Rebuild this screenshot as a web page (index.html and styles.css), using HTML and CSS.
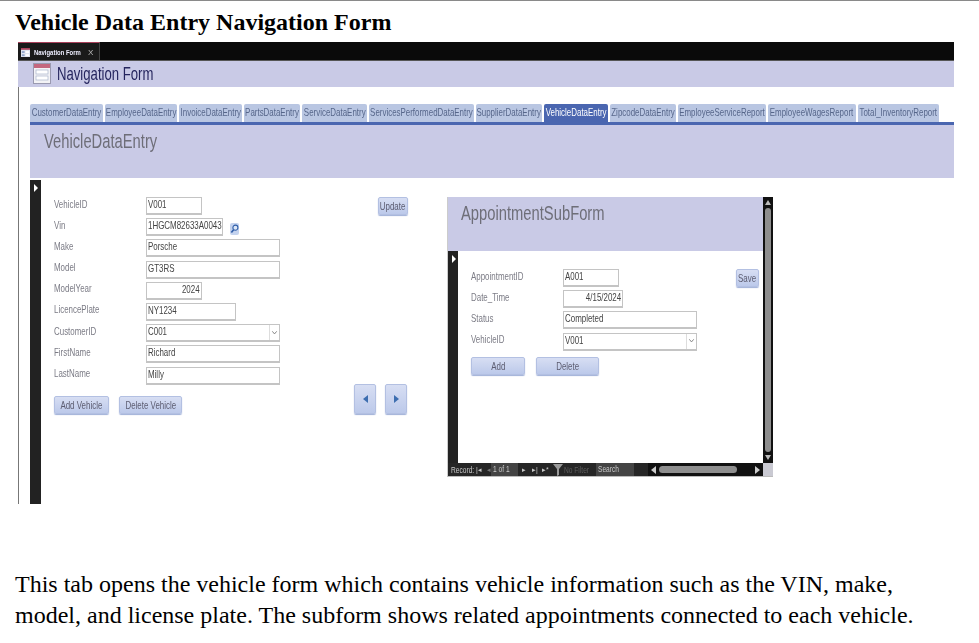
FILE: index.html
```html
<!DOCTYPE html>
<html lang="en">
<head>
<meta charset="UTF-8">
<meta name="viewport" content="width=device-width, initial-scale=1.0">
<title>Vehicle Data Entry Navigation Form</title>
<link rel="stylesheet" href="styles.css">
</head>
<body>
  <h1 class="title">Vehicle Data Entry Navigation Form</h1>

  <div class="shot">
    <div class="docbar">
      <div class="doctab">
        <svg class="doctab-icon" viewBox="0 0 10 10"><rect width="10" height="10" fill="#dfe3ee"/><rect width="10" height="2" fill="#a8405a"/><rect x="1" y="3.5" width="3" height="2" fill="#8fa3c8"/><rect x="5" y="3.5" width="4" height="2" fill="#fff"/><rect x="1" y="7" width="3" height="2" fill="#8fa3c8"/><rect x="5" y="7" width="4" height="2" fill="#fff"/></svg>
        <span class="doctab-name"><span class="sq">Navigation Form</span></span>
        <span class="doctab-x">X</span>
      </div>
    </div>
    <div class="formhead">
      <svg class="formhead-icon" viewBox="0 0 18 21"><rect x=".5" y=".5" width="17" height="20" fill="#f3f3f6" stroke="#9a9ab0"/><rect x="1" y="1" width="16" height="4" fill="#c4677f"/><rect x="3" y="7" width="12" height="4" fill="#fff" stroke="#a9b4cc" stroke-width=".7"/><rect x="3" y="13" width="12" height="4" fill="#fff" stroke="#a9b4cc" stroke-width=".7"/></svg>
      <span class="sq">Navigation Form</span>
    </div>

    <div class="formbody">
      <div class="tabs">
        <div class="tab t1"><span class="sq">CustomerDataEntry</span></div>
        <div class="tab t2"><span class="sq">EmployeeDataEntry</span></div>
        <div class="tab t3"><span class="sq">InvoiceDataEntry</span></div>
        <div class="tab t4"><span class="sq">PartsDataEntry</span></div>
        <div class="tab t5"><span class="sq">ServiceDataEntry</span></div>
        <div class="tab t6"><span class="sq">ServicesPerformedDataEntry</span></div>
        <div class="tab t7"><span class="sq">SupplierDataEntry</span></div>
        <div class="tab t8 active"><span class="sq">VehicleDataEntry</span></div>
        <div class="tab t9"><span class="sq">ZipcodeDataEntry</span></div>
        <div class="tab t10"><span class="sq">EmployeeServiceReport</span></div>
        <div class="tab t11"><span class="sq">EmployeeWagesReport</span></div>
        <div class="tab t12"><span class="sq">Total_InventoryReport</span></div>
      </div>
      <div class="pagehead"><span class="sq">VehicleDataEntry</span></div>

      <div class="detail">
        <div class="selector"><span class="selector-arrow"></span></div>
        <div class="entry">
          <div class="row"><label><span class="sq">VehicleID</span></label><div class="field w56"><span class="sq">V001</span></div></div>
          <div class="row"><label><span class="sq">Vin</span></label><div class="vin"><div class="field w77 clip"><span class="sq">1HGCM82633A00435</span></div><span class="lookup"><svg viewBox="0 0 10 12"><circle cx="6" cy="4.5" r="2.8" fill="#dbe6f7" stroke="#2f5ea8" stroke-width="1.2"/><path d="M4 6.8 1.5 10" stroke="#2f5ea8" stroke-width="1.8"/></svg></span></div></div>
          <div class="row"><label><span class="sq">Make</span></label><div class="field w134"><span class="sq">Porsche</span></div></div>
          <div class="row"><label><span class="sq">Model</span></label><div class="field w134"><span class="sq">GT3RS</span></div></div>
          <div class="row"><label><span class="sq">ModelYear</span></label><div class="field w56 num"><span class="sq">2024</span></div></div>
          <div class="row"><label><span class="sq">LicencePlate</span></label><div class="field w90"><span class="sq">NY1234</span></div></div>
          <div class="row"><label><span class="sq">CustomerID</span></label><div class="field w134 combo"><span class="sq">C001</span><span class="combo-btn"><svg viewBox="0 0 8 6"><path d="M1.5 1.5 4 4.5 6.5 1.5" fill="none" stroke="#777"/></svg></span></div></div>
          <div class="row"><label><span class="sq">FirstName</span></label><div class="field w134"><span class="sq">Richard</span></div></div>
          <div class="row"><label><span class="sq">LastName</span></label><div class="field w134"><span class="sq">Milly</span></div></div>
          <div class="actions">
            <div class="btn w55"><span class="sq">Add Vehicle</span></div>
            <div class="btn w63"><span class="sq">Delete Vehicle</span></div>
          </div>
        </div>

        <div class="side">
          <div class="btn w30 update"><span class="sq">Update</span></div>
          <div class="pager">
            <div class="btn arrow"><span class="tri tri-left"></span></div>
            <div class="btn arrow"><span class="tri tri-right"></span></div>
          </div>
        </div>

        <div class="sub">
          <div class="sub-top">
            <div class="sub-main">
              <div class="sub-head"><span class="sq">AppointmentSubForm</span></div>
              <div class="sub-detail">
                <div class="selector sub-selector"><span class="selector-arrow"></span></div>
                <div class="sub-entry">
                  <div class="row"><label><span class="sq">AppointmentID</span></label><div class="field w56"><span class="sq">A001</span></div></div>
                  <div class="row"><label><span class="sq">Date_Time</span></label><div class="field w60 num"><span class="sq">4/15/2024</span></div></div>
                  <div class="row"><label><span class="sq">Status</span></label><div class="field w134"><span class="sq">Completed</span></div></div>
                  <div class="row"><label><span class="sq">VehicleID</span></label><div class="field w134 combo"><span class="sq">V001</span><span class="combo-btn"><svg viewBox="0 0 8 6"><path d="M1.5 1.5 4 4.5 6.5 1.5" fill="none" stroke="#777"/></svg></span></div></div>
                  <div class="actions sub-actions">
                    <div class="btn w54"><span class="sq">Add</span></div>
                    <div class="btn w63"><span class="sq">Delete</span></div>
                  </div>
                </div>
                <div class="btn save"><span class="sq">Save</span></div>
              </div>
            </div>
            <div class="vscroll">
              <span class="tri tri-up"></span>
              <span class="vthumb"></span>
              <span class="tri tri-down"></span>
            </div>
          </div>
          <div class="recbar">
            <span class="rec-label"><span class="sq">Record:</span></span>
            <span class="rec-nav rec-first">|◂</span>
            <span class="rec-nav rec-prev">◂</span>
            <span class="rec-box rec-count"><span class="sq">1 of 1</span></span>
            <span class="rec-nav">▸</span>
            <span class="rec-nav">▸|</span>
            <span class="rec-nav">▸*</span>
            <svg class="rec-funnel" viewBox="0 0 10 12"><path d="M0 0h10L6 5v6L4 12V5z" fill="#9a9a9a"/></svg>
            <span class="rec-filter"><span class="sq">No Filter</span></span>
            <span class="rec-box rec-search"><span class="sq">Search</span></span>
            <span class="hscroll">
              <span class="tri tri-left small"></span>
              <span class="hthumb"></span>
              <span class="tri tri-right small"></span>
            </span>
            <span class="corner"></span>
          </div>
        </div>
      </div>
    </div>
  </div>

  <p class="caption">This tab opens the vehicle form which contains vehicle information such as the VIN, make, model, and license plate. The subform shows related appointments connected to each vehicle.</p>
</body>
</html>
```

FILE: styles.css
```css
* {
  box-sizing: border-box;
}

body {
  margin: 0;
  padding: 0 15px;
  background: #fff;
  color: #000;
  font-family: "Liberation Serif", serif;
  border-top: 1px solid #8a8a8a;
}

.title {
  margin: 0;
  padding-top: 7px;
  font-size: 24px;
  line-height: 28px;
  font-weight: bold;
}

.caption {
  margin: 65px 0 0;
  font-size: 24px;
  line-height: 31px;
  width: 930px;
}

/* the pasted Access screenshot, its text squeezed sideways like the original */
.shot {
  margin: 6px 0 0 3px;
  width: 936px;
  height: 462px;
  font-family: "Liberation Sans", sans-serif;
  font-size: 11.5px;
  filter: blur(0.35px);
}

.sq {
  display: inline-block;
  white-space: nowrap;
  transform: scaleX(0.69);
  transform-origin: left center;
}

.docbar {
  height: 19px;
  background: #0a0a0a;
  border-bottom: 1px solid #555;
}

.doctab {
  display: flex;
  align-items: center;
  width: 82px;
  height: 18px;
  padding: 1px 0 0 3px;
  border-top: 1px solid #a8405a;
  border-right: 1px solid #444;
  background: #1a1a1a;
  color: #eef;
  font-size: 8px;
  font-weight: bold;
}

.doctab .sq {
  transform: scaleX(0.74);
}

.doctab-icon {
  width: 9px;
  height: 9px;
  margin-right: 4px;
}

.doctab-name {
  width: 50px;
}

.doctab-x {
  margin-left: 4px;
  font-weight: normal;
  color: #bbb;
}

.formhead {
  display: flex;
  align-items: center;
  height: 26px;
  padding: 0 0 1px 15px;
  background: #c9cae6;
  color: #25255e;
  font-size: 18.5px;
}

.formhead .sq {
  transform: scaleX(0.71);
}

.formhead-icon {
  flex: none;
  width: 18px;
  height: 21px;
  margin-right: 6px;
}

.formbody {
  height: 417px;
  padding: 17px 0 0 11px;
  border-left: 1px solid #777;
}

.tabs {
  display: flex;
  align-items: flex-end;
  height: 21px;
  border-bottom: 3px solid #4a66b0;
}

.tab {
  display: flex;
  flex: none;
  justify-content: center;
  height: 18px;
  margin-right: 2px;
  padding-top: 1px;
  background: #b9c6e2;
  color: #56668a;
  font-size: 11.5px;
  line-height: 14px;
  border-radius: 2px 2px 0 0;
}

.tab .sq {
  transform-origin: center;
}

.tab.active {
  background: #4a66b0;
  color: #fff;
}

.t1 { width: 73px; }
.t2 { width: 72px; }
.t3 { width: 63px; }
.t4 { width: 56px; }
.t5 { width: 65px; }
.t6 { width: 105px; }
.t7 { width: 66px; }
.t8 { width: 64px; }
.t9 { width: 66px; }
.t10 { width: 88px; }
.t11 { width: 88px; }
.t12 { width: 81px; margin-right: 0; }

.pagehead {
  height: 53px;
  padding: 4px 0 0 14px;
  background: #c9cae6;
  color: #6e6e78;
  font-size: 20.5px;
  line-height: 24px;
}

.pagehead .sq,
.sub-head .sq {
  transform: scaleX(0.72);
}

.detail {
  display: flex;
  height: 326px;
}

.selector {
  flex: none;
  width: 11px;
  margin-top: 2px;
  background: #222;
}

.selector-arrow {
  display: block;
  width: 0;
  height: 0;
  margin: 4px 0 0 4px;
  border-left: 4px solid #fff;
  border-top: 4px solid transparent;
  border-bottom: 4px solid transparent;
}

.entry {
  flex: none;
  width: 313px;
  padding: 19px 0 0 13px;
}

.row {
  display: grid;
  grid-template-columns: 92px auto;
  align-items: center;
  height: 18px;
  margin-bottom: 3.2px;
}

.row label {
  padding-bottom: 5px;
  color: #7b7b85;
  line-height: 12px;
}

.field {
  position: relative;
  height: 18px;
  padding: 0 1px 3px;
  border: 1px solid #c4c4c4;
  border-bottom-width: 2px;
  background: #fff;
  color: #444;
  line-height: 13px;
  white-space: nowrap;
}

.clip {
  overflow: hidden;
}

.num {
  text-align: right;
}

.num .sq {
  transform-origin: right center;
}

.w56 { width: 56px; }
.w60 { width: 60px; }
.w77 { width: 77px; }
.w90 { width: 90px; }
.w134 { width: 134px; }
.w30 { width: 30px; }
.w54 { width: 54px; }
.w55 { width: 55px; }
.w63 { width: 63px; }

.vin {
  display: flex;
  align-items: center;
}

.lookup {
  display: flex;
  width: 9px;
  height: 12px;
  margin: 3px 0 0 7px;
  background: #c3d2ee;
  border-radius: 2px;
}

.combo-btn {
  position: absolute;
  top: 0;
  right: 0;
  display: flex;
  align-items: center;
  width: 10px;
  height: 15px;
  padding: 0 1px;
  border-left: 1px solid #ddd;
}

.actions {
  display: flex;
  gap: 10px;
  margin-top: 11px;
}

.btn {
  display: flex;
  flex: none;
  align-items: center;
  justify-content: center;
  height: 18px;
  background: linear-gradient(#d7def3, #bcc9ea);
  border: 1px solid #b3c0e2;
  border-radius: 2px;
  box-shadow: 0 1px 1px #9fb0d8;
  color: #5c5c70;
}

.btn .sq {
  transform-origin: center;
}

.side {
  display: flex;
  flex: none;
  flex-direction: column;
  justify-content: space-between;
  width: 54px;
  height: 236px;
  padding-top: 19px;
}

.update {
  margin-left: 24px;
}

.pager {
  display: flex;
  gap: 9px;
}

.arrow {
  width: 22px;
  height: 30px;
}

.tri {
  display: block;
  flex: none;
  width: 0;
  height: 0;
}

.tri-left {
  border-right: 5px solid #3d6eb0;
  border-top: 4px solid transparent;
  border-bottom: 4px solid transparent;
}

.tri-right {
  border-left: 5px solid #3d6eb0;
  border-top: 4px solid transparent;
  border-bottom: 4px solid transparent;
}

.sub {
  display: flex;
  flex: none;
  flex-direction: column;
  width: 326px;
  height: 280px;
  margin: 19px 0 0 39px;
  border-bottom: 1px solid #bbb;
  border-left: 1px solid #ccc;
}

.sub-top {
  display: flex;
  flex: 1;
  min-height: 0;
}

.sub-main {
  display: flex;
  flex: 1;
  flex-direction: column;
}

.sub-head {
  height: 54px;
  padding: 4px 0 0 13px;
  background: #c9cae6;
  color: #6e6e78;
  font-size: 20.5px;
  line-height: 24px;
}

.sub-detail {
  display: flex;
  flex: 1;
}

.sub-selector {
  width: 10px;
  margin-top: 0;
}

.sub-entry {
  flex: none;
  width: 239px;
  padding: 18px 0 0 13px;
}

.sub-actions {
  gap: 11px;
  margin-top: 6px;
}

.save {
  width: 23px;
  margin: 18px 0 0 39px;
}

.vscroll {
  display: flex;
  flex: none;
  flex-direction: column;
  align-items: center;
  width: 10px;
  padding: 3px 0;
  background: #111;
}

.vthumb {
  flex: 1;
  width: 6px;
  margin: 3px 0;
  background: #8e8e8e;
  border-radius: 3px;
}

.tri-up {
  border-bottom: 5px solid #bbb;
  border-left: 3px solid transparent;
  border-right: 3px solid transparent;
}

.tri-down {
  border-top: 5px solid #bbb;
  border-left: 3px solid transparent;
  border-right: 3px solid transparent;
}

.recbar {
  display: flex;
  flex: none;
  align-items: center;
  height: 13px;
  padding-left: 3px;
  background: #262626;
  color: #c8c8c8;
  font-size: 8.5px;
  white-space: nowrap;
}

.recbar .sq {
  transform: scaleX(0.78);
}

.rec-label {
  flex: none;
  width: 25px;
}

.rec-nav {
  flex: none;
  width: 10px;
  font-size: 7px;
  line-height: 13px;
}

.rec-first {
  width: 11px;
}

.rec-prev {
  width: 4px;
  overflow: hidden;
  color: #777;
}

.rec-box {
  flex: none;
  height: 13px;
  padding-left: 2px;
  background: #444;
  line-height: 13px;
}

.rec-count {
  width: 27px;
  margin-right: 4px;
}

.rec-funnel {
  flex: none;
  width: 10px;
  height: 12px;
  margin-left: 1px;
}

.rec-filter {
  flex: none;
  width: 33px;
  padding-left: 1px;
  color: #5d5d5d;
}

.rec-search {
  width: 38px;
}

.hscroll {
  display: flex;
  flex: 1;
  align-items: center;
  min-width: 0;
  height: 13px;
  margin-left: 14px;
  padding: 0 3px;
  background: #111;
}

.hthumb {
  width: 78px;
  height: 7px;
  margin: 0 auto 0 3px;
  background: #8e8e8e;
  border-radius: 4px;
}

.small {
  border-left-color: #ccc;
  border-right-color: #ccc;
}

.corner {
  flex: none;
  width: 10px;
  height: 13px;
  background: #c9c9d2;
}
```
